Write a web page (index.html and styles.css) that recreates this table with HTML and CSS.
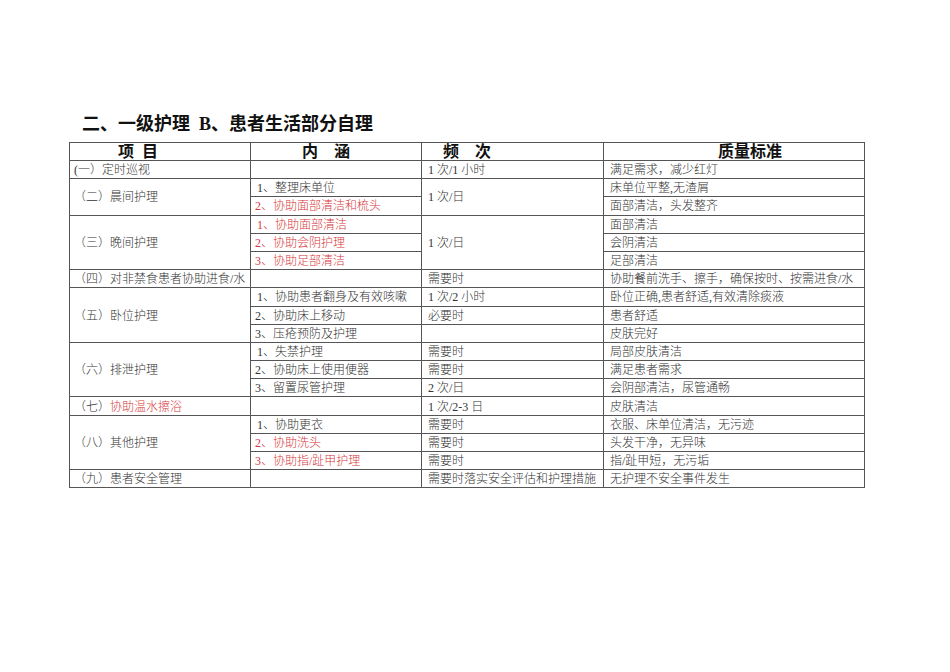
FILE: index.html
```html
<!DOCTYPE html>
<html lang="zh-CN">
<head>
<meta charset="utf-8">
<title>一级护理</title>
<link rel="stylesheet" href="styles.css">
</head>
<body>
<div class="page">
  <h1 class="title">二、一级护理&nbsp;&nbsp;B、患者生活部分自理</h1>
  <table class="care">
    <colgroup>
      <col class="c1"><col class="c2"><col class="c3"><col class="c4">
    </colgroup>
    <thead>
      <tr>
        <th class="h1">项&nbsp;&nbsp;目</th>
        <th class="h2">内&nbsp;&nbsp;&nbsp;&nbsp;涵</th>
        <th class="h3">频&nbsp;&nbsp;&nbsp;&nbsp;次</th>
        <th class="h4">质量标准</th>
      </tr>
    </thead>
    <tbody>
      <tr><td>(一）定时巡视</td><td></td><td>1 次/1 小时</td><td>满足需求，减少红灯</td></tr>
      <tr><td rowspan="2" class="grp">（二）晨间护理</td><td>1、整理床单位</td><td rowspan="2">1 次/日</td><td>床单位平整,无渣屑</td></tr>
      <tr><td class="red">2、协助面部清洁和梳头</td><td>面部清洁，头发整齐</td></tr>
      <tr><td rowspan="3" class="grp">（三）晚间护理</td><td class="red">1、协助面部清洁</td><td rowspan="3">1 次/日</td><td>面部清洁</td></tr>
      <tr><td class="red">2、协助会阴护理</td><td>会阴清洁</td></tr>
      <tr><td class="red">3、协助足部清洁</td><td>足部清洁</td></tr>
      <tr><td class="grp">（四）对非禁食患者协助进食/水</td><td></td><td>需要时</td><td>协助餐前洗手、擦手，确保按时、按需进食/水</td></tr>
      <tr><td rowspan="3" class="grp">（五）卧位护理</td><td>1、协助患者翻身及有效咳嗽</td><td>1 次/2 小时</td><td>卧位正确,患者舒适,有效清除痰液</td></tr>
      <tr><td>2、协助床上移动</td><td>必要时</td><td>患者舒适</td></tr>
      <tr><td>3、压疮预防及护理</td><td></td><td>皮肤完好</td></tr>
      <tr><td rowspan="3" class="grp">（六）排泄护理</td><td>1、失禁护理</td><td>需要时</td><td>局部皮肤清洁</td></tr>
      <tr><td>2、协助床上使用便器</td><td>需要时</td><td>满足患者需求</td></tr>
      <tr><td>3、留置尿管护理</td><td>2 次/日</td><td>会阴部清洁，尿管通畅</td></tr>
      <tr><td class="grp">（七）<span class="red">协助温水擦浴</span></td><td></td><td>1 次/2-3 日</td><td>皮肤清洁</td></tr>
      <tr><td rowspan="3" class="grp">（八）其他护理</td><td>1、协助更衣</td><td>需要时</td><td>衣服、床单位清洁，无污迹</td></tr>
      <tr><td class="red">2、协助洗头</td><td>需要时</td><td>头发干净，无异味</td></tr>
      <tr><td class="red">3、协助指/趾甲护理</td><td>需要时</td><td>指/趾甲短，无污垢</td></tr>
      <tr><td class="grp">（九）患者安全管理</td><td></td><td>需要时落实安全评估和护理措施</td><td>无护理不安全事件发生</td></tr>
    </tbody>
  </table>
</div>
</body>
</html>
```

FILE: styles.css
```css
html, body {
  margin: 0;
  padding: 0;
  background: #ffffff;
}

.page {
  padding: 113px 0 0 69px;
}

.title {
  margin: 0 0 7px 0;
  padding-left: 13px;
  font-family: "Liberation Serif", "Noto Sans CJK SC", serif;
  font-weight: bold;
  font-size: 18px;
  line-height: 22px;
  color: #111111;
}

.care {
  border-collapse: collapse;
  table-layout: fixed;
  width: 795px;
  font-family: "Liberation Serif", "Noto Sans CJK SC", serif;
  font-size: 12px;
  font-weight: 300;
  color: #333333;
}

.c1 { width: 181px; }
.c2 { width: 171px; }
.c3 { width: 182px; }
.c4 { width: 261px; }

.care th,
.care td {
  border: 1px solid #555555;
  padding: 0 0 0 6px;
  text-align: left;
  vertical-align: middle;
  white-space: nowrap;
  overflow: hidden;
}

.care th {
  height: 17px;
  font-family: "Liberation Serif", "Noto Sans CJK SC", serif;
  font-weight: bold;
  font-size: 16px;
  line-height: 17px;
  color: #111111;
}

.care th.h1 { padding-left: 48px; }
.care th.h2 { padding-left: 51px; }
.care th.h3 { padding-left: 21px; }
.care th.h4 { padding-left: 114px; }

.care td {
  height: 15.2px;
  padding-top: 2px;
  line-height: 15px;
}

.care td:first-child,
.care td.grp {
  padding-left: 4px;
}

.red {
  color: #d8373c;
}
```
